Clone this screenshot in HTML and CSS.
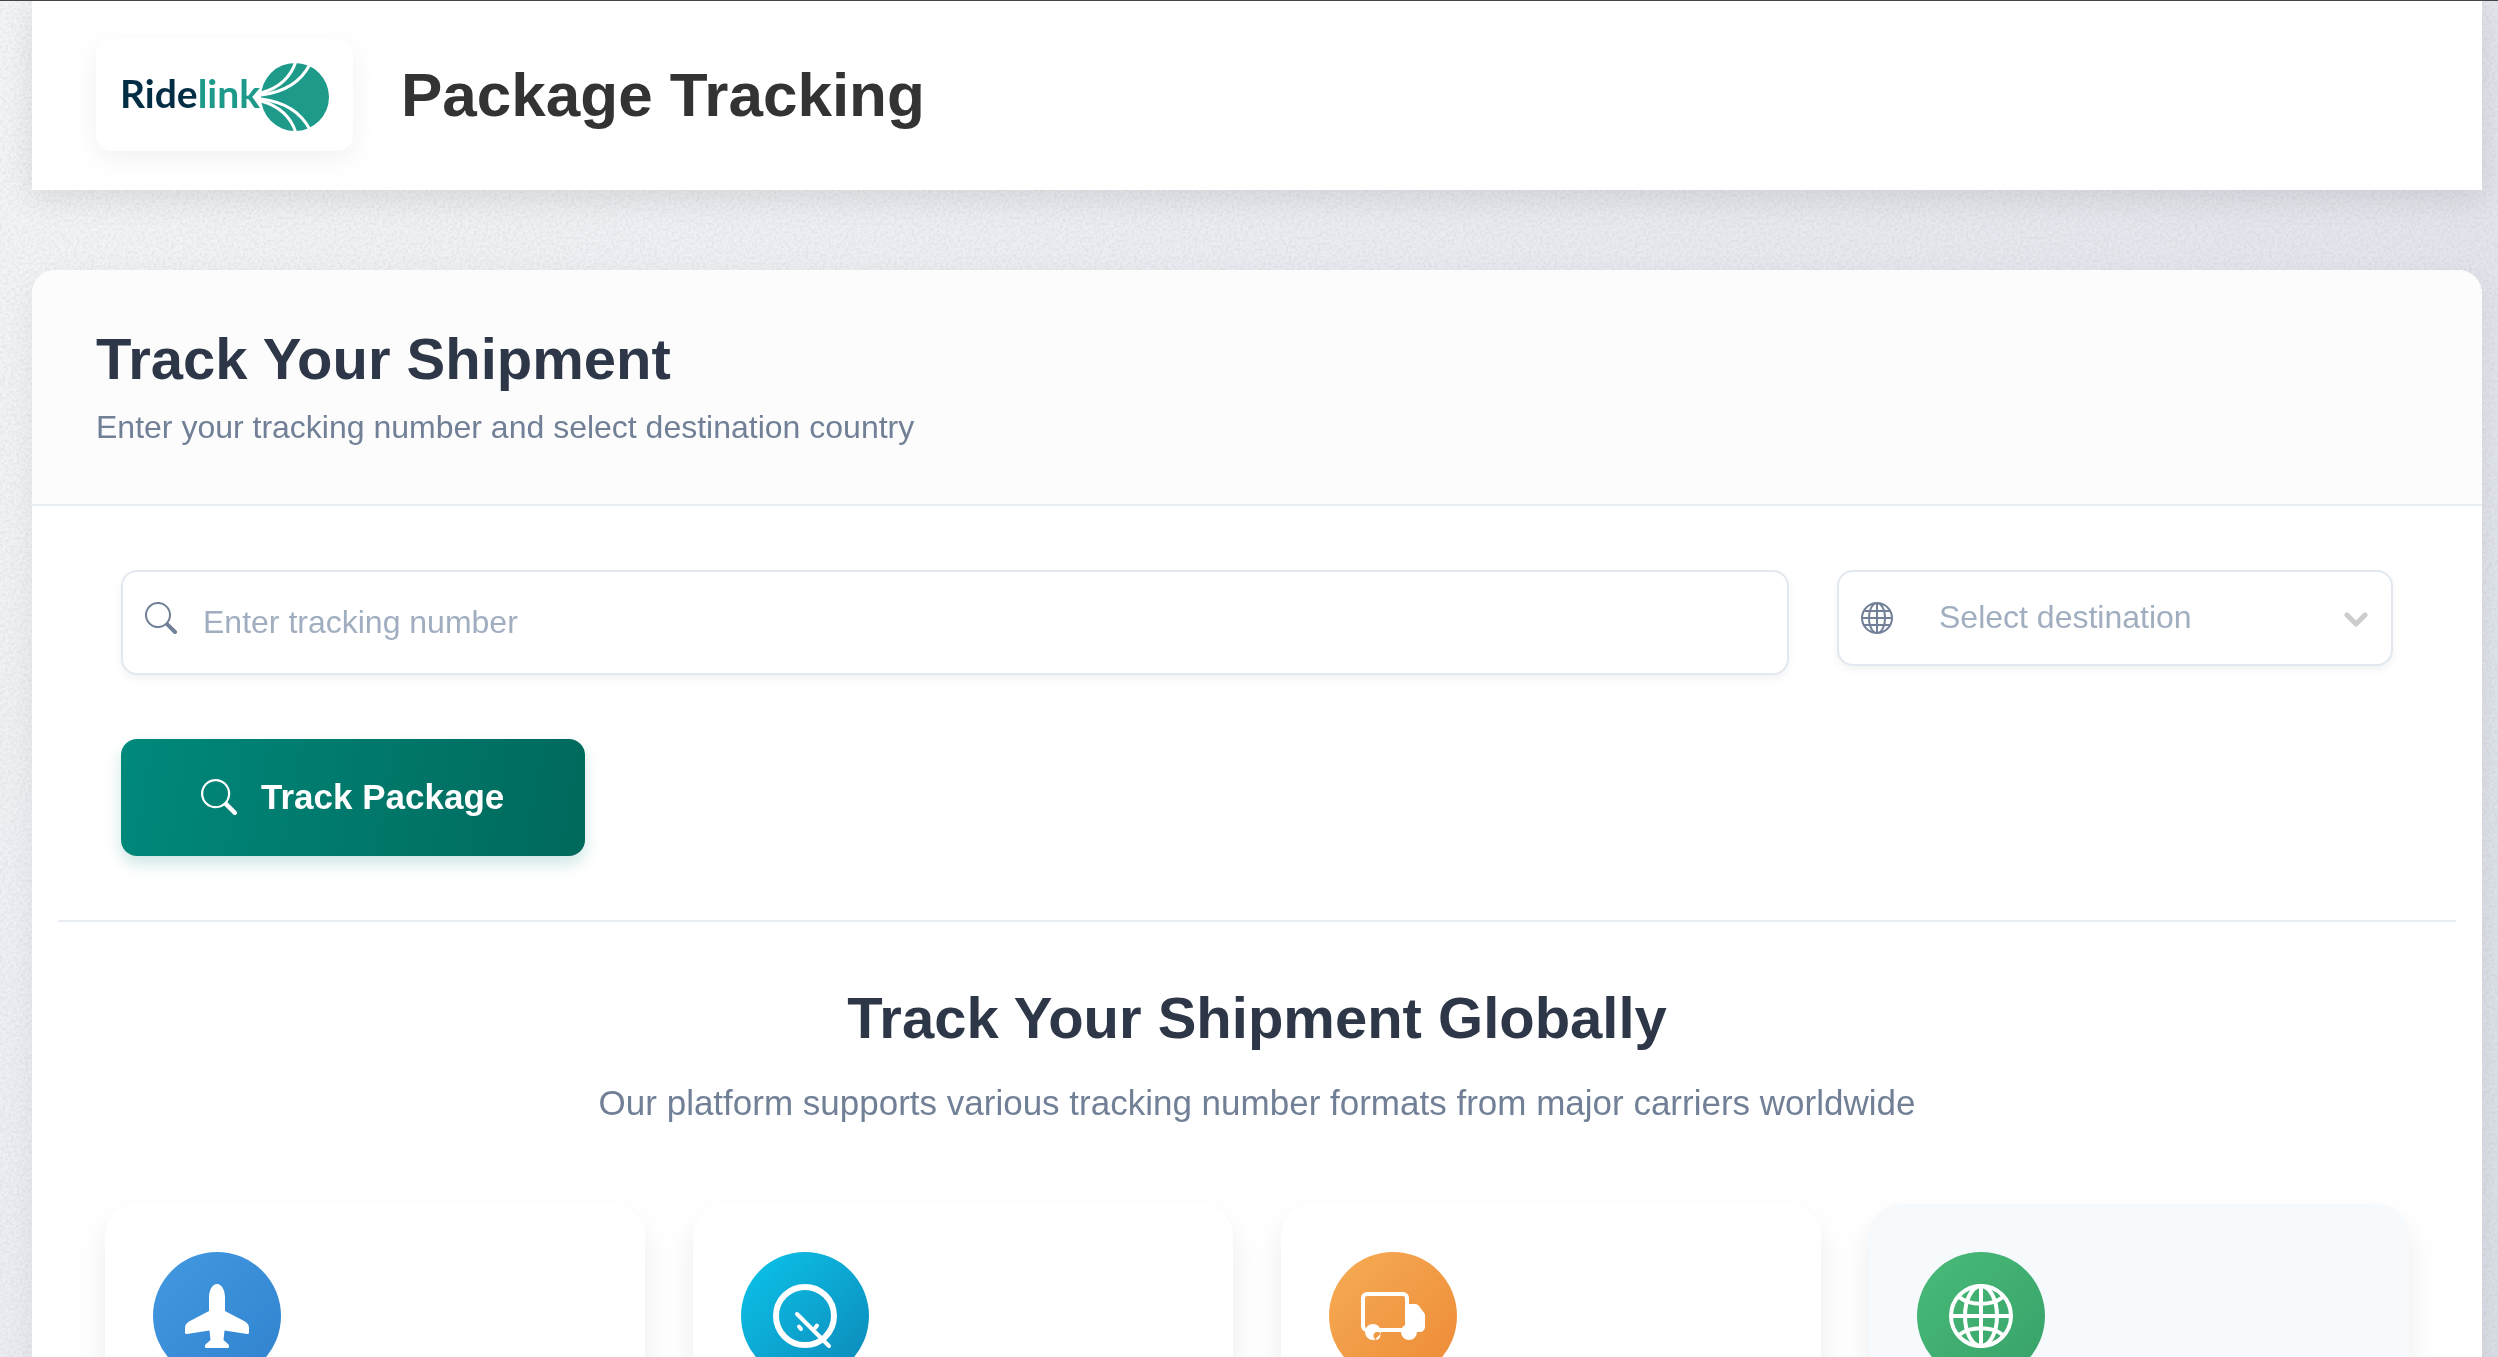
FILE: index.html
```html
<!DOCTYPE html>
<html lang="en">
<head>
  <meta charset="UTF-8">
  <meta name="viewport" content="width=device-width,initial-scale=1.0">
  <title>Package Tracking</title>
  <link rel="stylesheet" href="styles.css">
</head>
<body>
  <svg class="grain" aria-hidden="true">
    <filter id="grain" x="0" y="0" width="100%" height="100%">
      <feTurbulence type="fractalNoise" baseFrequency="0.35" numOctaves="3" stitchTiles="stitch"/>
      <feColorMatrix type="matrix" values="0 0 0 0 .4  0 0 0 0 .4  0 0 0 0 .4  3 0 0 0 -1.2"/>
    </filter>
    <rect width="100%" height="100%" filter="url(#grain)"/>
  </svg>

  <!-- Header -->
  <header class="header">
    <div class="logo">
      <svg viewBox="0 0 209 80" role="img" aria-label="Ridelink">
        <text class="logo-text" x="0" y="53"><tspan class="navy">Ride</tspan><tspan class="teal">link</tspan></text>
        <circle class="teal" cx="175" cy="42" r="34"/>
        <g class="stripes">
          <path d="M141 38C159 33 171 22 176 6"/>
          <path d="M141 40C165 37 181 27 190 9"/>
          <path d="M141 46C159 51 171 62 176 78"/>
          <path d="M141 44C165 47 181 57 190 75"/>
        </g>
      </svg>
    </div>
    <h1>Package Tracking</h1>
  </header>

  <main class="panel">
    <div class="panel-head">
      <h2>Track Your Shipment</h2>
      <p>Enter your tracking number and select destination country</p>
    </div>

    <div class="panel-body">
      <!-- Tracking form -->
      <form class="track-form">
        <div class="fields">
          <div class="field">
            <label for="trackingNumber" class="field-icon" title="Tracking number">
              <svg viewBox="0 0 16 16"><path d="M11.742 10.344a6.5 6.5 0 1 0-1.397 1.398h-.001c.03.04.062.078.098.115l3.85 3.85a1 1 0 0 0 1.415-1.414l-3.85-3.85a1.007 1.007 0 0 0-.115-.1zM12 6.5a5.5 5.5 0 1 1-11 0 5.5 5.5 0 0 1 11 0z"/></svg>
            </label>
            <input id="trackingNumber" type="text" placeholder="Enter tracking number">
          </div>
          <div class="field">
            <label for="destination" class="field-icon" title="Destination country">
              <svg viewBox="0 0 16 16"><path d="M0 8a8 8 0 1 1 16 0A8 8 0 0 1 0 8zm7.5-6.923c-.67.204-1.335.82-1.887 1.855A7.97 7.97 0 0 0 5.145 4H7.5V1.077zM4.09 4a9.267 9.267 0 0 1 .64-1.539 6.7 6.7 0 0 1 .597-.933A7.025 7.025 0 0 0 2.255 4H4.09zm-.582 3.5c.03-.877.138-1.718.312-2.5H1.674a6.958 6.958 0 0 0-.656 2.5h2.49zM4.847 5a12.5 12.5 0 0 0-.338 2.5H7.5V5H4.847zM8.5 5v2.5h2.99a12.495 12.495 0 0 0-.337-2.5H8.5zM4.51 8.5a12.5 12.5 0 0 0 .337 2.5H7.5V8.5H4.51zm3.99 0V11h2.653c.187-.765.306-1.608.338-2.5H8.5zM5.145 12c.138.386.295.744.468 1.068.552 1.035 1.218 1.65 1.887 1.855V12H5.145zm.182 2.472a6.696 6.696 0 0 1-.597-.933A9.268 9.268 0 0 1 4.09 12H2.255a7.024 7.024 0 0 0 3.072 2.472zM3.82 11a13.652 13.652 0 0 1-.312-2.5h-2.49c.062.89.291 1.733.656 2.5H3.82zm6.853 3.472A7.024 7.024 0 0 0 13.745 12H11.91a9.27 9.27 0 0 1-.64 1.539 6.688 6.688 0 0 1-.597.933zM8.5 12v2.923c.67-.204 1.335-.82 1.887-1.855.173-.324.33-.682.468-1.068H8.5zm3.68-1h2.146c.365-.767.594-1.61.656-2.5h-2.49a13.65 13.65 0 0 1-.312 2.5zm2.802-3.5a6.959 6.959 0 0 0-.656-2.5H12.18c.174.782.282 1.623.312 2.5h2.49zM11.27 2.461c.247.464.462.98.64 1.539h1.835a7.024 7.024 0 0 0-3.072-2.472c.218.284.418.598.597.933zM10.855 4a7.966 7.966 0 0 0-.468-1.068C9.835 1.897 9.17 1.282 8.5 1.077V4h2.355z"/></svg>
            </label>
            <select id="destination">
              <option value="">Select destination</option>
            </select>
            <svg class="chevron" viewBox="0 0 24 16" aria-hidden="true"><path d="M3 3l9 9L21 3"/></svg>
          </div>
        </div>
        <button type="submit" class="track-btn">
          <svg viewBox="0 0 16 16" aria-hidden="true"><path d="M11.742 10.344a6.5 6.5 0 1 0-1.397 1.398h-.001c.03.04.062.078.098.115l3.85 3.85a1 1 0 0 0 1.415-1.414l-3.85-3.85a1.007 1.007 0 0 0-.115-.1zM12 6.5a5.5 5.5 0 1 1-11 0 5.5 5.5 0 0 1 11 0z"/></svg>
          Track Package
        </button>
      </form>

      <!-- Carriers -->
      <section class="global">
        <h2>Track Your Shipment Globally</h2>
        <p>Our platform supports various tracking number formats from major carriers worldwide</p>
        <div class="cards">
          <div class="card">
            <div class="badge blue">
              <svg viewBox="0 0 64 64"><path class="fill" d="M32 0c5 0 8 7 8 13v14l20 10.500C63 39.500 64 41.500 64 44v4.500c0 1-.7 1.700-1.800 1.500L39.500 46.500 38.500 56l4.500 4c1.500 1.500 1.500 4-.5 4h-21c-2 0-2-2.500-.5-4l4.500-4-1-9.500L1.800 50C.7 50.200 0 49.500 0 48.500V44c0-2.500 1-4.500 4-6.500L24 27V13c0-6 3-13 8-13z"/></svg>
            </div>
          </div>
          <div class="card">
            <div class="badge cyan">
              <svg viewBox="0 0 64 64"><circle cx="32" cy="32" r="29" stroke-width="6"/><path d="M24 30l32 32M26 42.500l2 2.500M42.500 43.500l1.500-2"/></svg>
            </div>
          </div>
          <div class="card">
            <div class="badge orange">
              <svg viewBox="0 0 64 64">
                <rect x="2" y="10" width="44" height="36" rx="4"/>
                <path class="fill" d="M46 20h8c2 0 3.500 1 4.500 2.500l5 7c.5 1 .5 1.500.5 2.500v10c0 4-2 6-6 6H44z"/>
                <circle class="fill" cx="48" cy="48" r="8"/>
                <path class="fill" d="M4 48a8 8 0 1 1 16 0c0 2-.5 4-2 6l2-4a4 4 0 1 0-5 5.500l-3 .5a8 8 0 0 1-8-8z"/>
                <path class="fill" d="M15 54.500l4.500-4.500c0 3-1.500 5.500-4 6z"/>
              </svg>
            </div>
          </div>
          <div class="card tinted">
            <div class="badge green">
              <svg viewBox="0 0 64 64"><circle cx="32" cy="32" r="30"/><ellipse cx="32" cy="32" rx="16" ry="30"/><path d="M32 2v60M2 32h60M10 13c11 9 33 9 44 0M10 51c11-9 33-9 44 0"/></svg>
            </div>
          </div>
        </div>
      </section>
    </div>
  </main>
</body>
</html>
```
FILE: styles.css
```css
:root{--teal:#1d9a8a;--navy:#032d45;--heading:#2d3748;--muted:#718096;--placeholder:#a0aec0;--line:#e2e8f0}
*{box-sizing:border-box;margin:0;padding:0}
body{font-family:"Liberation Sans",Arial,sans-serif;height:100vh;overflow:hidden;padding:0 16px 0 32px;border-top:1px solid #444;background:linear-gradient(135deg,#f4f5f8 0%,#dbdfe7 100%);color:var(--heading)}
.grain{position:fixed;inset:0;width:100%;height:100%;opacity:.14;z-index:-1}

.header{display:flex;align-items:center;gap:48px;padding:38px 64px 39px;background:#fff;box-shadow:0 8px 30px rgba(0,0,0,.1)}
.logo{padding:16px 24px;border-radius:16px;background:#fff;box-shadow:0 8px 30px rgba(0,0,0,.06)}
.logo svg{display:block;width:209px;height:80px}
.logo-text{font-family:Lato,sans-serif;font-size:39px;font-weight:700}
.navy{fill:var(--navy)}
.teal{fill:var(--teal)}
.stripes{fill:none;stroke:#fff;stroke-width:3}
.header h1{font-size:62px;line-height:72px;color:#333}

.panel{margin-top:80px;background:#fff;border-radius:24px;overflow:hidden;box-shadow:0 8px 30px rgba(0,0,0,.06)}
.panel-head{padding:54px 64px 51px;background:#fcfcfc;border-bottom:2px solid #e8edf3}
h2{font-size:58px;line-height:70px}
.panel-head p{margin-top:8px;font-size:32px;line-height:51px;color:var(--muted)}
.panel-body{padding:0 26px}

.track-form{padding:64px 63px;border-bottom:2px solid #e8edf3}
.fields{display:grid;grid-template-columns:3fr 1fr;gap:48px;align-items:start;margin-bottom:64px}
.field{position:relative}
.field-icon{position:absolute;left:24px;top:32px;display:flex}
.field-icon svg{width:32px;height:32px;fill:var(--muted)}
.field input,.field select{display:block;width:100%;border:2px solid var(--line);border-radius:16px;background:#fff;font-family:inherit;font-size:32px;box-shadow:0 4px 8px rgba(0,0,0,.05)}
.field input{height:105px;padding:0 24px 0 80px;color:var(--heading)}
.field input::placeholder{color:var(--placeholder)}
.field select{height:96px;padding:0 72px 2px 100px;color:var(--placeholder);appearance:none}
.chevron{position:absolute;right:25px;top:42px;width:24px;height:16px;fill:none;stroke:#ccc;stroke-width:5;stroke-linecap:round;stroke-linejoin:round;pointer-events:none}

.track-btn{display:flex;align-items:center;gap:24px;height:117px;padding:0 81px 2px 80px;border:none;border-radius:16px;background:linear-gradient(100deg,#00897b 0%,#00695c 100%);color:#fff;font-family:inherit;font-size:35px;font-weight:700;cursor:pointer;box-shadow:0 8px 16px rgba(0,137,123,.2)}
.track-btn svg{width:36px;height:36px;fill:#fff}

.global{padding:61px 47px 64px;text-align:center}
.global p{margin-top:22px;font-size:35px;line-height:56px;color:var(--muted)}
.cards{display:grid;grid-template-columns:repeat(4,1fr);gap:48px;margin-top:73px;text-align:left}
.card{padding:48px;border-radius:32px;background:#fff;box-shadow:0 16px 32px rgba(0,0,0,.08)}
.card.tinted{background:#f6fafd}
.badge{display:flex;align-items:center;justify-content:center;width:128px;height:128px;border-radius:50%}
.badge svg{width:64px;height:64px;fill:none;stroke:#fff;stroke-width:4;stroke-linecap:round;overflow:visible}
.badge .fill{fill:#fff;stroke:none}
.blue{background:linear-gradient(135deg,#4299e1,#3182ce)}
.cyan{background:linear-gradient(135deg,#0bc5ea,#0d87b8)}
.orange{background:linear-gradient(135deg,#f6ad55,#ed8936)}
.green{background:linear-gradient(135deg,#48bb78,#38a169)}
```
